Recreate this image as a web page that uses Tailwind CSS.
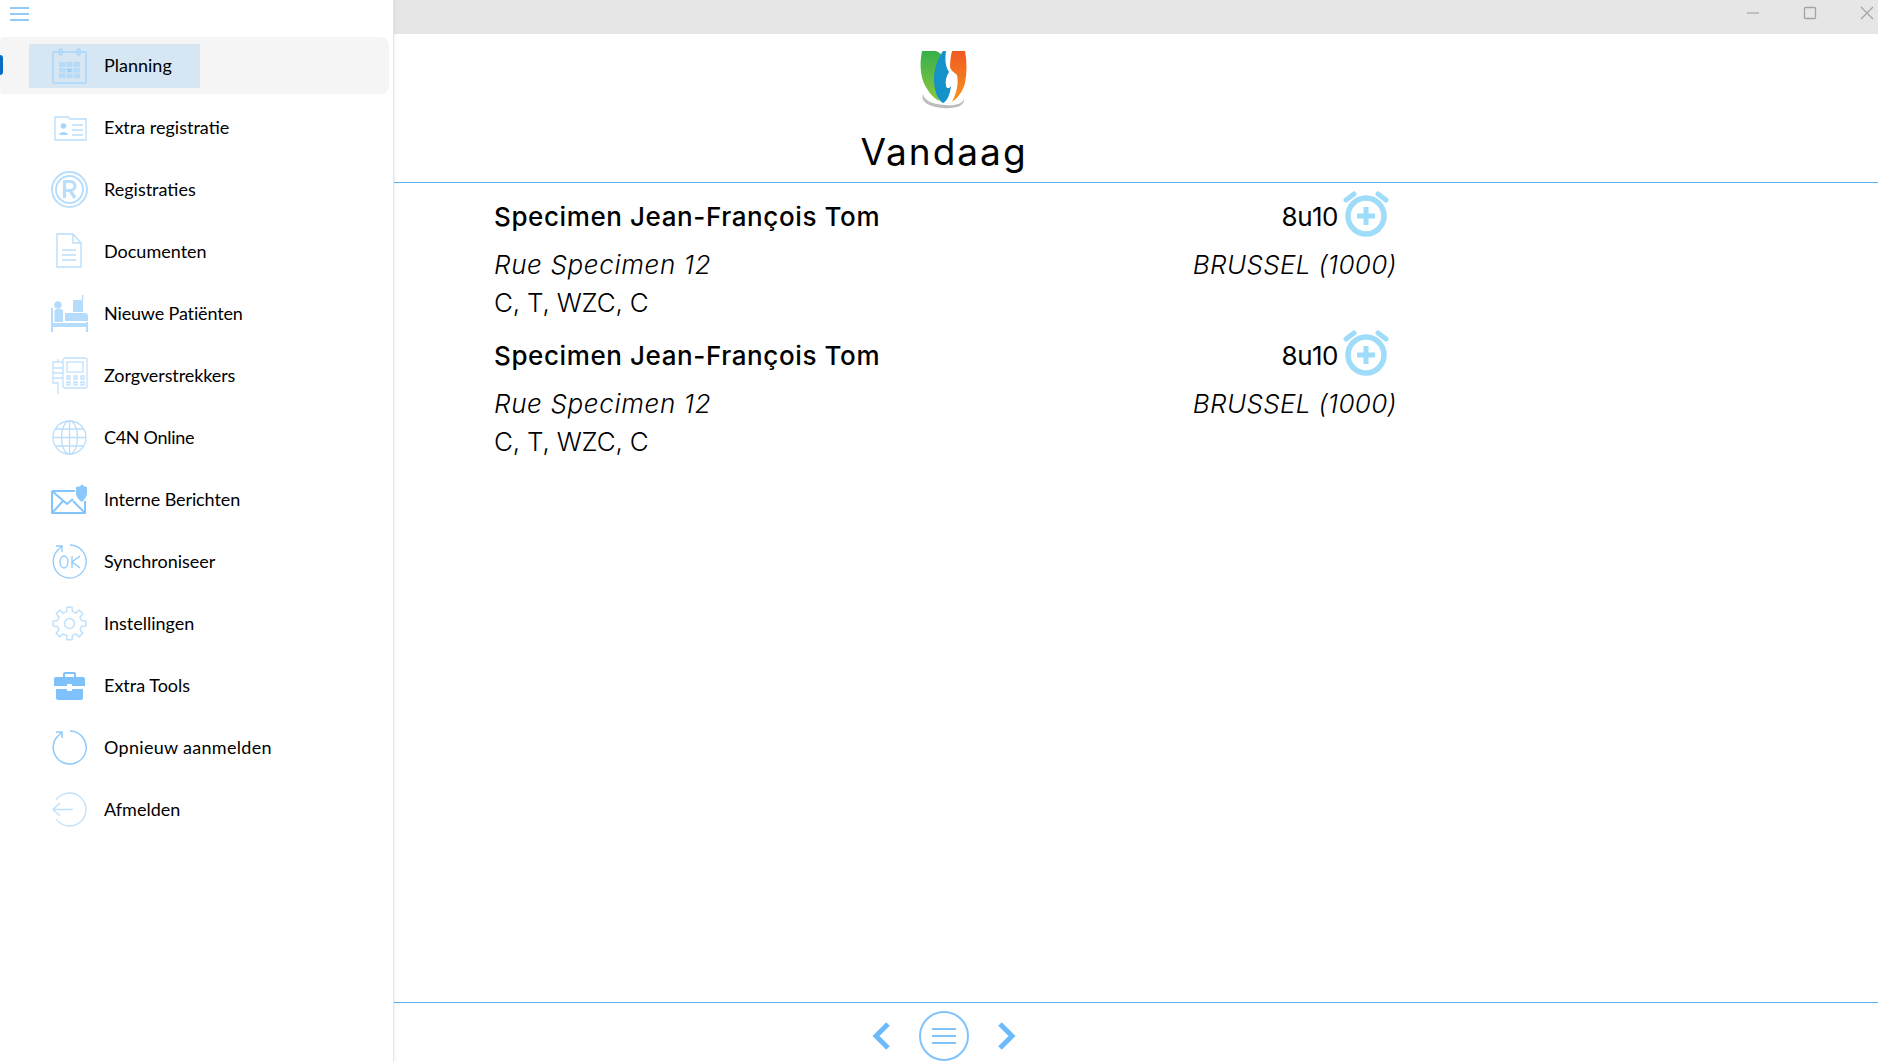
<!DOCTYPE html>
<html lang="en">
<head>
    <meta charset="UTF-8">
    <title>Vandaag</title>
    <script src="https://cdn.jsdelivr.net/npm/@tailwindcss/browser@4"></script>
</head>
<body class="h-[1062px] w-[1878px] overflow-hidden bg-white text-black font-['Lato',sans-serif]">
<div class="flex h-full">
    <!-- Sidebar -->
    <aside class="w-[394px] h-full shrink-0 bg-white border-r border-gray-200 shadow-[0_0_4px_rgba(0,0,0,0.08)] z-10 relative">
        <div class="h-[37px] pl-[10px] pt-[7px]">
            <svg width="19" height="14" viewBox="0 0 19 14" stroke="#6fbbfa" stroke-width="1.4"><path d="M0 1h19M0 7h19M0 13h19"/></svg>
        </div>
        <div class="absolute left-0 top-[55px] w-[3px] h-[20px] bg-[#0a6cc0] rounded-r"></div>
        <nav class="flex flex-col">
            <!-- Planning -->
            <div class="h-[57px] mr-[4px] bg-[#f5f5f5] rounded-r-lg rounded-l-sm flex items-center">
                <div class="ml-[29px] w-[171px] h-[44px] bg-[#d6e6f2] flex items-center">
                    <svg class="ml-[23px]" width="36" height="36" viewBox="0 0 36 36" fill="none" stroke="#a9d6fb" stroke-width="1.5"><rect x="1" y="4" width="33" height="31" rx="1"/><rect x="7" y="1" width="3" height="6" rx="1.5"/><rect x="25" y="1" width="3" height="6" rx="1.5"/><rect x="7" y="14" width="21" height="16" fill="#b5dbf8" stroke="none"/><path d="M14 14v16M21 14v16M7 19.500h21M7 25h21" stroke="#d6e6f2" stroke-width="1"/><path d="m16 21 3 3M19 21l-3 3" stroke="#8bbfe6" stroke-width="1"/></svg>
                    <span class="ml-[16px] text-[18px]">Planning</span>
                </div>
            </div>
            <!-- Extra registratie -->
            <div class="h-[62px] mt-[2px] flex items-center">
                <svg class="ml-[51px]" width="36" height="36" viewBox="0 0 36 36" fill="none" stroke="#b9defc" stroke-width="1.3"><path d="M4 8h13l2 2h16v21H4z"/><circle cx="12.500" cy="17" r="2.800" fill="#a9d6fb" stroke="none"/><path d="M8 26c0-4 9-4 9 0z" fill="#a9d6fb" stroke="none"/><path d="M21 16h11M21 21h11M21 26h11"/></svg>
                <span class="ml-[17px] text-[18px]">Extra registratie</span>
            </div>
            <!-- Registraties -->
            <div class="h-[62px] flex items-center">
                <svg class="ml-[51px]" width="37" height="37" viewBox="0 0 37 37" fill="none" stroke="#b9defc"><circle cx="18.500" cy="18.500" r="17.500" stroke-width="2"/><circle cx="18.500" cy="18.500" r="13.500" stroke-width="2"/><path d="M13.500 27V10.500h6a4.500 4.500 0 0 1 0 9h-6M19 19.500 24 27" stroke-width="3.200"/></svg>
                <span class="ml-[16px] text-[18px]">Registraties</span>
            </div>
            <!-- Documenten -->
            <div class="h-[62px] flex items-center">
                <svg class="ml-[55px]" width="28" height="36" viewBox="0 0 28 36" fill="none" stroke="#b9defc" stroke-width="1.400"><path d="M2 1h16l8 9v24H2z"/><path d="M18 1v9h8M7 17h14M7 22h14M7 27h14"/></svg>
                <span class="ml-[21px] text-[18px]">Documenten</span>
            </div>
            <!-- Nieuwe Patiënten -->
            <div class="h-[62px] flex items-center">
                <svg class="ml-[51px]" width="37" height="37" viewBox="0 0 37 37" fill="#b5dcfc"><circle cx="7" cy="10" r="3.800"/><path d="M0 13h2v15h33v-1h2v10h-2v-5H2v5H0z"/><path d="M3.500 15.500c0-2 8.500-2 8.500 0V27H3.500z"/><path d="M14 18h20a3 3 0 0 1 3 3v5H14z"/><rect x="22" y="5" width="10" height="12" rx="1"/><rect x="31" y="0" width="1.300" height="5"/></svg>
                <span class="ml-[16px] text-[18px] tracking-[-0.15px]">Nieuwe Patiënten</span>
            </div>
            <!-- Zorgverstrekkers -->
            <div class="h-[62px] flex items-center">
                <svg class="ml-[52px]" width="36" height="37" viewBox="0 0 36 37" fill="none" stroke="#c0e1fc" stroke-width="1.300"><rect x="11" y="1" width="24" height="30" rx="2"/><rect x="15" y="5" width="16" height="10"/><path d="M15 19h3v3h-3zM22 19h3v3h-3zM29 19h3v3h-3zM15 25h3v3h-3zM22 25h3v3h-3zM29 25h3v3h-3z"/><path d="M11 5H1v21h5v11M1 11h10M1 16h10M1 21h10M6 2v3"/></svg>
                <span class="ml-[16px] text-[18px] tracking-[-0.1px]">Zorgverstrekkers</span>
            </div>
            <!-- C4N Online -->
            <div class="h-[62px] flex items-center">
                <svg class="ml-[52px]" width="35" height="35" viewBox="0 0 35 35" fill="none" stroke="#b9defc" stroke-width="1.300"><circle cx="17.500" cy="17.500" r="16.500"/><ellipse cx="17.500" cy="17.500" rx="8" ry="16.500"/><path d="M17.500 1v33M1 17.500h33M3.500 9h28M3.500 26h28"/></svg>
                <span class="ml-[17px] text-[18px] tracking-[-0.3px]">C4N Online</span>
            </div>
            <!-- Interne Berichten -->
            <div class="h-[62px] flex items-center">
                <svg class="ml-[51px]" width="36" height="30" viewBox="0 0 36 30" fill="none"><path d="M1 7h23M1 7v22h33V17M1 7l15 13 6-5M1 29l11-12M34 29 22 17" stroke="#86c5fb" stroke-width="2"/><path d="M25 3c3 0 5-1 6-3 1 2 3 3 5 3v6c0 4-3 7-5 9-3-2-6-5-6-9z" fill="#8ac7fb"/></svg>
                <span class="ml-[17px] text-[18px] tracking-[-0.1px]">Interne Berichten</span>
            </div>
            <!-- Synchroniseer -->
            <div class="h-[62px] flex items-center">
                <svg class="ml-[52px]" width="35" height="35" viewBox="0 0 35 35" fill="none" stroke="#8fcafb" stroke-width="1.300"><path d="M18 1a16.500 16.500 0 1 1-13 6M4 2h6v6M10 2 4 8"/><ellipse cx="12" cy="18" rx="4" ry="6"/><path d="M20 12v12M28 12l-8 6 8 6"/></svg>
                <span class="ml-[17px] text-[18px]">Synchroniseer</span>
            </div>
            <!-- Instellingen -->
            <div class="h-[62px] flex items-center">
                <svg class="ml-[52px]" width="35" height="35" viewBox="0 0 35 35" fill="none" stroke="#c0e1fc" stroke-width="1.500" stroke-linejoin="round">
                    <defs><path id="tooth" d="M12.910 6.410 14.690 5.320 14.920 1.200H20.080L20.310 5.320 22.090 6.410"/></defs>
                    <circle cx="17.500" cy="17.500" r="5"/>
                    <use href="#tooth"/><use href="#tooth" transform="rotate(45 17.500 17.500)"/><use href="#tooth" transform="rotate(90 17.500 17.500)"/><use href="#tooth" transform="rotate(135 17.500 17.500)"/><use href="#tooth" transform="rotate(180 17.500 17.500)"/><use href="#tooth" transform="rotate(225 17.500 17.500)"/><use href="#tooth" transform="rotate(270 17.500 17.500)"/><use href="#tooth" transform="rotate(315 17.500 17.500)"/>
                </svg>
                <span class="ml-[17px] text-[18px]">Instellingen</span>
            </div>
            <!-- Extra Tools -->
            <div class="h-[62px] flex items-center">
                <svg class="ml-[54px]" width="31" height="29" viewBox="0 0 31 29" fill="#7fc1fb"><path d="M9 7V3a2 2 0 0 1 2-2h9a2 2 0 0 1 2 2v4h-2V3h-9v4z"/><path d="M2 6h27a2 2 0 0 1 2 2v7H18v-2h-5v2H0V8a2 2 0 0 1 2-2z"/><path d="M2 18h11v2h5v-2h11v9a2 2 0 0 1-2 2H4a2 2 0 0 1-2-2z"/></svg>
                <span class="ml-[19px] text-[18px]">Extra Tools</span>
            </div>
            <!-- Opnieuw aanmelden -->
            <div class="h-[62px] flex items-center">
                <svg class="ml-[52px]" width="35" height="35" viewBox="0 0 35 35" fill="none" stroke="#8fcafb" stroke-width="1.500"><path d="M18 1a16.500 16.500 0 1 1-13 6M4 2h6v6M10 2 4 8"/></svg>
                <span class="ml-[17px] text-[18px] tracking-[0.3px]">Opnieuw aanmelden</span>
            </div>
            <!-- Afmelden -->
            <div class="h-[62px] flex items-center">
                <svg class="ml-[52px]" width="35" height="35" viewBox="0 0 35 35" fill="none" stroke="#bfe0fc" stroke-width="1.300"><path d="M4 8a16.500 16.500 0 1 1 0 19M1 17.500h20M8 11l-7 6.500L8 24"/></svg>
                <span class="ml-[17px] text-[18px]">Afmelden</span>
            </div>
        </nav>
    </aside>

    <!-- Main -->
    <main class="flex-1 flex flex-col h-full min-w-0">
        <!-- Title bar -->
        <div class="h-[34px] bg-[#e6e6e6] shrink-0 flex justify-end items-center gap-[43px] pr-[4px] pb-[8px]">
            <svg width="14" height="14" viewBox="0 0 14 14" stroke="#a3a3a3" stroke-width="1.200"><path d="M1 7h12"/></svg>
            <svg width="14" height="14" viewBox="0 0 14 14" fill="none" stroke="#a3a3a3" stroke-width="1.300"><rect x="1.500" y="1.500" width="11" height="11" rx="1"/></svg>
            <svg width="14" height="14" viewBox="0 0 14 14" stroke="#a3a3a3" stroke-width="1.200"><path d="M1 1l12 12M13 1 1 13"/></svg>
        </div>

        <!-- Header -->
        <header class="h-[149px] shrink-0 border-b border-[#5cb2ef]">
            <div class="w-[1100px] flex flex-col items-center">
                <svg class="mt-[17px]" width="48" height="58" viewBox="0 0 46 58">
                    <defs>
                        <linearGradient id="g1" x1="0" y1="0" x2="0" y2="1"><stop offset="0" stop-color="#35b04a"/><stop offset="1" stop-color="#8cc63f"/></linearGradient>
                        <linearGradient id="g2" x1="0" y1="0" x2="0" y2="1"><stop offset="0" stop-color="#f05a22"/><stop offset="1" stop-color="#f7941d"/></linearGradient>
                    </defs>
                    <path d="M1 0h14c3 1 5 3 5 4-4 8-6 16-5 25 1 6 2 13 3 21C12 47 5 38 2 30-1 20-1 10 1 0z" fill="url(#g1)"/>
                    <path d="M22 0h3c-1 8-1 14 3 21-3 5-4 9-3 14 1 3 3 3 5 0-1 7-3 15-8 17-6-3-9-14-9-24 0-10 4-21 9-28z" fill="#1592c9"/>
                    <path d="M31 0h13c2 10 2 22 0 32-2 8-7 15-13 19 4-8 7-17 5-27-3-3-6-4-7-8 0-6 1-12 2-16z" fill="url(#g2)"/>
                    <path d="M2 43c1 6 8 10 22 11 10 1 17-1 19-6 1 7-9 10-21 9C9 56-1 51 2 43z" fill="#bcbcbc"/>
                </svg>
                <h1 class="mt-[18px] text-[37px] leading-[50px] tracking-[2px] font-['Inter',sans-serif]">Vandaag</h1>
            </div>
        </header>

        <!-- Appointments -->
        <section class="flex-1 pl-[100px] pt-[10px] font-['Inter',sans-serif]">
            <div class="w-[903px] h-[139px]">
                <div class="flex items-center justify-between h-[46px]">
                    <span class="text-[26px] font-medium tracking-[0.6px]">Specimen Jean-François Tom</span>
                    <div class="flex items-center gap-[5px] mr-[8px]">
                        <span class="text-[26px] tracking-[-0.5px]">8u10</span>
                        <svg class="-mt-[4px]" width="46" height="46" viewBox="0 0 46 46" fill="none"><circle cx="23" cy="25" r="18" stroke="#9edcf9" stroke-width="5.500"/><path d="M23 16v18M14 25h18" stroke="#9edcf9" stroke-width="5"/><path d="M3 9l8-6M43 9l-8-6" stroke="#9edcf9" stroke-width="5" stroke-linecap="round"/></svg>
                    </div>
                </div>
                <div class="flex justify-between items-center h-[49px] pt-[2px]">
                    <span class="text-[26px] italic font-light tracking-[0.65px]">Rue Specimen 12</span>
                    <span class="text-[26px] italic font-light tracking-[0.35px]">BRUSSEL (1000)</span>
                </div>
                <div class="text-[26px] font-light h-[39px] leading-[30px] tracking-[-0.2px]">C, T, WZC, C</div>
            </div>
            <div class="w-[903px] h-[139px]">
                <div class="flex items-center justify-between h-[46px]">
                    <span class="text-[26px] font-medium tracking-[0.6px]">Specimen Jean-François Tom</span>
                    <div class="flex items-center gap-[5px] mr-[8px]">
                        <span class="text-[26px] tracking-[-0.5px]">8u10</span>
                        <svg class="-mt-[4px]" width="46" height="46" viewBox="0 0 46 46" fill="none"><circle cx="23" cy="25" r="18" stroke="#9edcf9" stroke-width="5.500"/><path d="M23 16v18M14 25h18" stroke="#9edcf9" stroke-width="5"/><path d="M3 9l8-6M43 9l-8-6" stroke="#9edcf9" stroke-width="5" stroke-linecap="round"/></svg>
                    </div>
                </div>
                <div class="flex justify-between items-center h-[49px] pt-[2px]">
                    <span class="text-[26px] italic font-light tracking-[0.65px]">Rue Specimen 12</span>
                    <span class="text-[26px] italic font-light tracking-[0.35px]">BRUSSEL (1000)</span>
                </div>
                <div class="text-[26px] font-light h-[39px] leading-[30px] tracking-[-0.2px]">C, T, WZC, C</div>
            </div>
        </section>

        <!-- Bottom bar -->
        <footer class="h-[60px] shrink-0 border-t border-[#5cb2ef] pt-[8px]">
            <div class="w-[1100px] flex items-center justify-center gap-[28px]">
                <svg width="20" height="28" viewBox="0 0 20 28" fill="none" stroke="#6cbafa" stroke-width="5"><path d="M17 2 5 14l12 12"/></svg>
                <svg width="50" height="50" viewBox="0 0 50 50" fill="none" stroke="#80c3fb"><circle cx="25" cy="25" r="24" stroke-width="2"/><path d="M13 18h24M13 25h24M13 32h24" stroke-width="2"/></svg>
                <svg width="20" height="28" viewBox="0 0 20 28" fill="none" stroke="#6cbafa" stroke-width="5"><path d="m3 2 12 12L3 26"/></svg>
            </div>
        </footer>
    </main>
</div>
</body>
</html>
